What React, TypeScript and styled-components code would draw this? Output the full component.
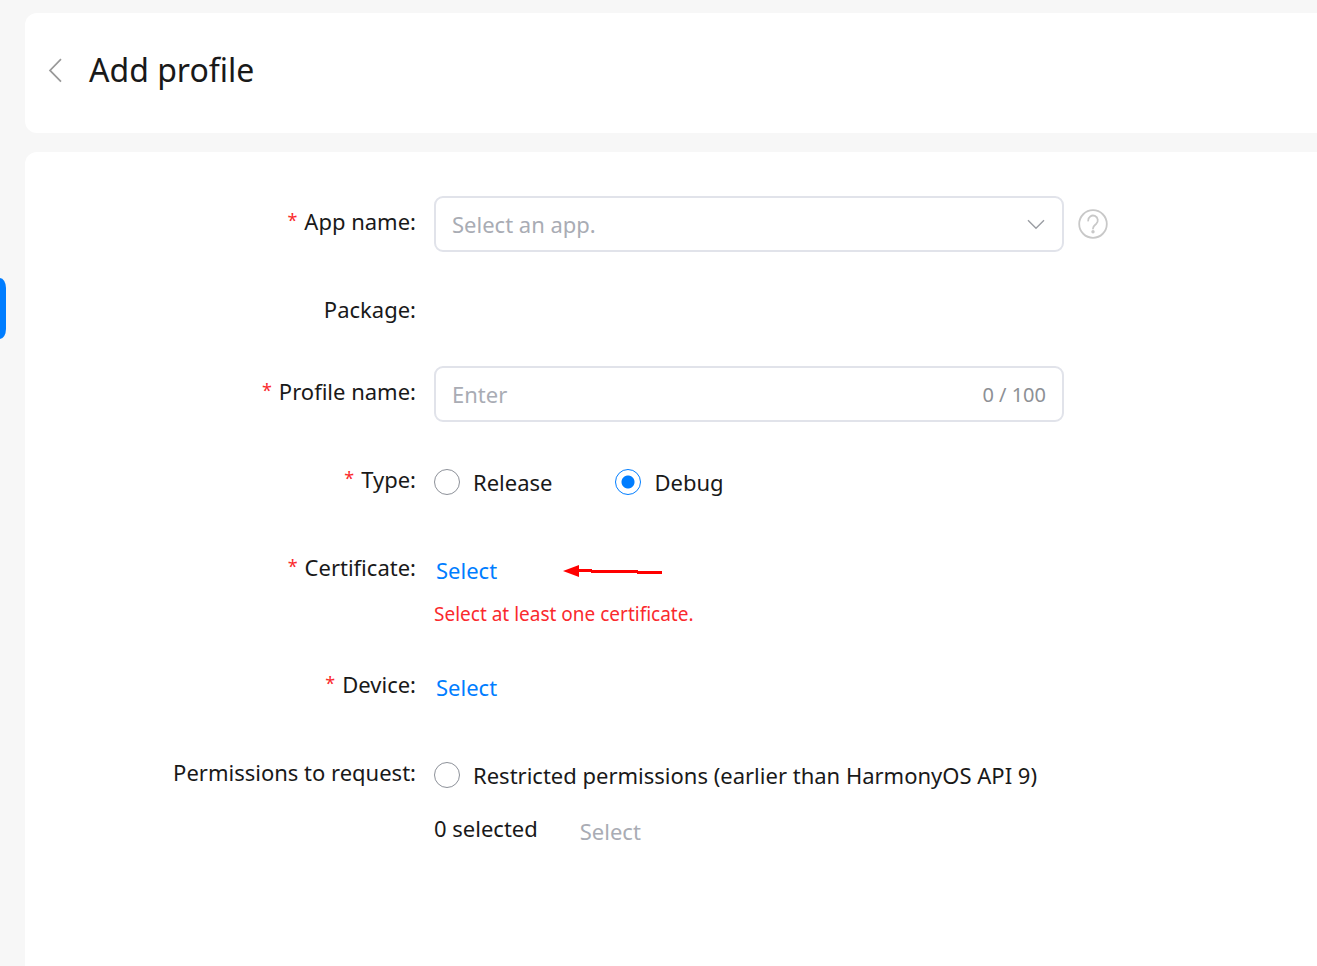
import React, { useState } from "react";
import styled, { createGlobalStyle } from "styled-components";

const GlobalStyle = createGlobalStyle`
  * {
    box-sizing: border-box;
  }
  body {
    margin: 0;
    background: #f7f7f7;
    color: #191919;
    font-family: "Noto Sans", "Open Sans", sans-serif;
    font-size: 22px;
  }
  button,
  input,
  select {
    font: inherit;
    color: inherit;
  }
`;

const Page = styled.div`
  display: flex;
  min-height: 100vh;
`;

const Rail = styled.nav`
  flex: none;
  width: 25px;
  padding-top: 278px;
`;

const RailTab = styled.button`
  display: block;
  width: 6px;
  height: 61px;
  padding: 0;
  border: 0;
  border-radius: 0 6px 6px 0 / 0 10px 10px 0;
  background: #007dff;
  cursor: pointer;
`;

const Content = styled.main`
  flex: 1;
  min-width: 0;
  display: flex;
  flex-direction: column;
  gap: 19px;
  padding-top: 13px;
`;

const Header = styled.header`
  display: flex;
  align-items: center;
  gap: 24px;
  height: 120px;
  padding: 0 22px 6px;
  border-radius: 12px 0 0 12px;
  background: #fff;
`;

const BackButton = styled.button`
  display: flex;
  padding: 0;
  border: 0;
  background: none;
  cursor: pointer;
`;

const Title = styled.h1`
  margin: 0;
  font-size: 32px;
  font-weight: 400;
  line-height: 44px;
`;

const Form = styled.form`
  flex: 1;
  display: flex;
  flex-direction: column;
  gap: 32px;
  padding: 44px 24px 44px 0;
  border-radius: 12px 0 0 0;
  background: #fff;
`;

const Row = styled.div`
  display: flex;
  gap: 18px;
`;

const LabelCell = styled.div`
  flex: none;
  width: 391px;
  line-height: 50px;
  text-align: right;
  white-space: nowrap;
`;

const Star = styled.span`
  margin-right: 7px;
  color: #fa2a2d;
  font-size: 18px;
  line-height: 1;
  vertical-align: 3px;
`;

const Control = styled.div`
  flex: 1;
  min-width: 0;
`;

const Line = styled.div<{ $gap?: number }>`
  display: flex;
  align-items: center;
  gap: ${(p) => p.$gap ?? 0}px;
  min-height: 56px;
`;

const Field = styled.div`
  flex: 0 1 630px;
  display: flex;
  align-items: center;
  height: 56px;
  padding: 0 16px;
  border: 2px solid #e1e3ea;
  border-radius: 9px;
  background: #fff;
`;

const AppSelect = styled.select`
  flex: 1;
  min-width: 0;
  height: 52px;
  padding: 0;
  border: 0;
  outline: 0;
  background: none;
  appearance: none;
  color: #a9acb4;
`;

const NameInput = styled.input`
  flex: 1;
  min-width: 0;
  height: 52px;
  padding: 0;
  border: 0;
  outline: 0;
  background: none;
  &::placeholder {
    color: #a9acb4;
    opacity: 1;
  }
`;

const Counter = styled.span`
  color: #8d9095;
  font-size: 20px;
`;

const HelpButton = styled(BackButton)`
  margin-left: 14px;
`;

const RadioLabel = styled.label`
  display: flex;
  align-items: center;
  gap: 13px;
  cursor: pointer;
`;

const Radio = styled.input`
  flex: none;
  width: 26px;
  height: 26px;
  margin: 0;
  border: 1px solid #8d9199;
  border-radius: 50%;
  background: #fff;
  appearance: none;
  &:checked {
    border-color: #007dff;
    background: radial-gradient(circle, #007dff 6px, #fff 7px);
  }
`;

const TextButton = styled.button`
  padding: 0 2px;
  border: 0;
  background: none;
  color: #007dff;
  cursor: pointer;
  &:disabled {
    color: #a9acb4;
    cursor: default;
  }
`;

const ErrorText = styled.p`
  margin: 0;
  padding-top: 4px;
  color: #fa2a2d;
  font-size: 19px;
  line-height: 25px;
`;

const Count = styled.span`
  align-self: flex-start;
  line-height: 50px;
`;

function LabelText({ text, required }: { text: string; required?: boolean }) {
  return (
    <>
      {required && <Star>*</Star>}
      {text}
    </>
  );
}

export default function App() {
  const [name, setName] = useState("");
  const [type, setType] = useState("debug");

  return (
    <>
      <GlobalStyle />
      <Page>
        <Rail>
          <RailTab type="button" aria-label="Open menu" />
        </Rail>
        <Content>
          <Header>
            <BackButton type="button" aria-label="Back">
              <svg width="18" height="26" viewBox="0 0 18 26" fill="none" stroke="#999" strokeWidth="1.7">
                <path d="M14 2.2 3 13.4 14 24.6" />
              </svg>
            </BackButton>
            <Title>Add profile</Title>
          </Header>
          <Form onSubmit={(e) => e.preventDefault()}>
            <Row>
              <LabelCell>
                <label htmlFor="app"><LabelText text="App name:" required /></label>
              </LabelCell>
              <Control>
                <Line>
                  <Field>
                    <AppSelect id="app" defaultValue="">
                      <option value="">Select an app.</option>
                    </AppSelect>
                    <svg width="20" height="20" viewBox="0 0 20 20" fill="none" stroke="#9a9da3" strokeWidth="1.4">
                      <path d="M2 6.3 10 14.3 18 6.3" />
                    </svg>
                  </Field>
                  <HelpButton type="button" aria-label="Help">
                    <svg width="30" height="30" viewBox="0 0 30 30" fill="none" stroke="#c8c8c8" strokeWidth="1.8">
                      <circle cx="15" cy="15" r="13.8" />
                      <path d="M10.2 11.6a4.800 4.800 0 1 1 7.900 3.400c-1.900 1.500-3.100 2.100-3.100 4.600" strokeLinecap="round" />
                      <circle cx="15" cy="22.800" r="1.700" fill="#c8c8c8" stroke="none" />
                    </svg>
                  </HelpButton>
                </Line>
              </Control>
            </Row>
            <Row>
              <LabelCell><LabelText text="Package:" /></LabelCell>
            </Row>
            <Row>
              <LabelCell>
                <label htmlFor="name"><LabelText text="Profile name:" required /></label>
              </LabelCell>
              <Control>
                <Line>
                  <Field>
                    <NameInput id="name" placeholder="Enter" maxLength={100} value={name} onChange={(e) => setName(e.target.value)} />
                    <Counter>{name.length} / 100</Counter>
                  </Field>
                </Line>
              </Control>
            </Row>
            <Row role="radiogroup" aria-labelledby="type">
              <LabelCell id="type"><LabelText text="Type:" required /></LabelCell>
              <Control>
                <Line $gap={63}>
                  <RadioLabel>
                    <Radio type="radio" name="type" checked={type === "release"} onChange={() => setType("release")} />
                    Release
                  </RadioLabel>
                  <RadioLabel>
                    <Radio type="radio" name="type" checked={type === "debug"} onChange={() => setType("debug")} />
                    Debug
                  </RadioLabel>
                </Line>
              </Control>
            </Row>
            <Row>
              <LabelCell id="certificate"><LabelText text="Certificate:" required /></LabelCell>
              <Control>
                <Line $gap={64}>
                  <TextButton type="button" aria-describedby="certificate">Select</TextButton>
                  <svg width="100" height="16" viewBox="0 0 100 16" fill="#f00" aria-hidden="true">
                    <path d="M0 9 16 3V7H29V8H75V9H99V12H74V11H28V10H16V15Z" />
                  </svg>
                </Line>
                <ErrorText>Select at least one certificate.</ErrorText>
              </Control>
            </Row>
            <Row>
              <LabelCell id="device"><LabelText text="Device:" required /></LabelCell>
              <Control>
                <Line>
                  <TextButton type="button" aria-describedby="device">Select</TextButton>
                </Line>
              </Control>
            </Row>
            <Row>
              <LabelCell><LabelText text="Permissions to request:" /></LabelCell>
              <Control>
                <Line>
                  <RadioLabel>
                    <Radio type="radio" name="permissions" />
                    Restricted permissions (earlier than HarmonyOS API 9)
                  </RadioLabel>
                </Line>
                <Line $gap={40}>
                  <Count>0 selected</Count>
                  <TextButton type="button" disabled>Select</TextButton>
                </Line>
              </Control>
            </Row>
          </Form>
        </Content>
      </Page>
    </>
  );
}
